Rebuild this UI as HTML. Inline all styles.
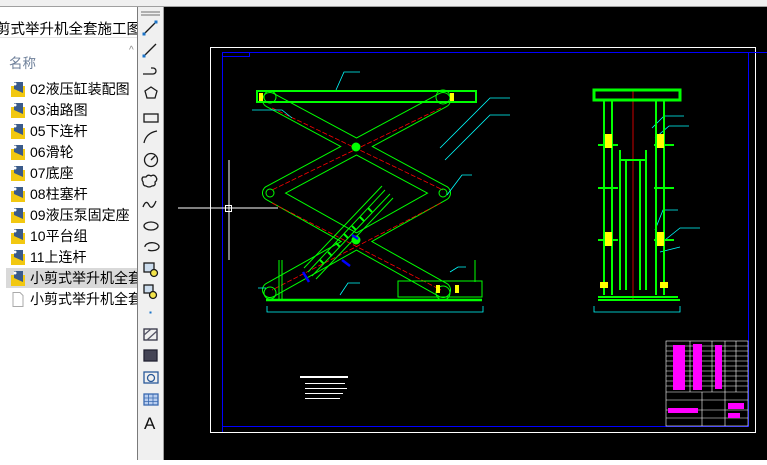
<!DOCTYPE html>
<html><head><meta charset="utf-8"><style>
*{margin:0;padding:0;box-sizing:border-box}
body{width:767px;height:460px;overflow:hidden;background:#fff;font-family:"Liberation Sans","Noto Sans CJK SC",sans-serif;position:relative}
#top{position:absolute;left:0;top:0;width:767px;height:7px;background:#f0f0f0;border-bottom:1px solid #a0a0a0}
#left{position:absolute;left:0;top:7px;width:137px;height:453px;background:#fff;overflow:hidden}
.t{position:absolute;left:-4px;top:11px;font-size:14.5px;color:#000;white-space:nowrap}
.sep{position:absolute;left:0;top:30px;width:137px;height:1px;background:#e5e5e5}
.hd{position:absolute;left:9px;top:45px;font-size:13.5px;color:#6d7f99}
.car{position:absolute;left:129px;top:38px;font-size:10px;color:#888}
.it{position:absolute;left:6px;height:20px;width:140px;font-size:14px;line-height:20px;white-space:nowrap;padding-left:24px}
.it.sel{background:#d9d9d9}
.ic{position:absolute;left:5px;top:3px;width:14px;height:15px}
#tb{position:absolute;left:137px;top:7px;width:27px;height:453px;background:#f0f0f0;border-left:1px solid #7a7a7a;border-right:1px solid #a0a0a0}
#cv{position:absolute;left:164px;top:7px;width:603px;height:453px;background:#000}
</style></head><body>
<div id="top"></div>
<div id="left">
<div class="t">剪式举升机全套施工图</div>
<div class="sep"></div>
<div class="hd">名称</div><div class="car">^</div>
<div class="it" style="top:72px"><svg class="ic" viewBox="0 0 14 15"><path d="M0 4h14v11H0z" fill="#f2c811"/><path d="M3 0h9l0 11L3 7z" fill="#3a5a8a"/><circle cx="4" cy="2" r="1.5" fill="#fff"/></svg>02液压缸装配图</div>
<div class="it" style="top:93px"><svg class="ic" viewBox="0 0 14 15"><path d="M0 4h14v11H0z" fill="#f2c811"/><path d="M3 0h9l0 11L3 7z" fill="#3a5a8a"/><circle cx="4" cy="2" r="1.5" fill="#fff"/></svg>03油路图</div>
<div class="it" style="top:114px"><svg class="ic" viewBox="0 0 14 15"><path d="M0 4h14v11H0z" fill="#f2c811"/><path d="M3 0h9l0 11L3 7z" fill="#3a5a8a"/><circle cx="4" cy="2" r="1.5" fill="#fff"/></svg>05下连杆</div>
<div class="it" style="top:135px"><svg class="ic" viewBox="0 0 14 15"><path d="M0 4h14v11H0z" fill="#f2c811"/><path d="M3 0h9l0 11L3 7z" fill="#3a5a8a"/><circle cx="4" cy="2" r="1.5" fill="#fff"/></svg>06滑轮</div>
<div class="it" style="top:156px"><svg class="ic" viewBox="0 0 14 15"><path d="M0 4h14v11H0z" fill="#f2c811"/><path d="M3 0h9l0 11L3 7z" fill="#3a5a8a"/><circle cx="4" cy="2" r="1.5" fill="#fff"/></svg>07底座</div>
<div class="it" style="top:177px"><svg class="ic" viewBox="0 0 14 15"><path d="M0 4h14v11H0z" fill="#f2c811"/><path d="M3 0h9l0 11L3 7z" fill="#3a5a8a"/><circle cx="4" cy="2" r="1.5" fill="#fff"/></svg>08柱塞杆</div>
<div class="it" style="top:198px"><svg class="ic" viewBox="0 0 14 15"><path d="M0 4h14v11H0z" fill="#f2c811"/><path d="M3 0h9l0 11L3 7z" fill="#3a5a8a"/><circle cx="4" cy="2" r="1.5" fill="#fff"/></svg>09液压泵固定座</div>
<div class="it" style="top:219px"><svg class="ic" viewBox="0 0 14 15"><path d="M0 4h14v11H0z" fill="#f2c811"/><path d="M3 0h9l0 11L3 7z" fill="#3a5a8a"/><circle cx="4" cy="2" r="1.5" fill="#fff"/></svg>10平台组</div>
<div class="it" style="top:240px"><svg class="ic" viewBox="0 0 14 15"><path d="M0 4h14v11H0z" fill="#f2c811"/><path d="M3 0h9l0 11L3 7z" fill="#3a5a8a"/><circle cx="4" cy="2" r="1.5" fill="#fff"/></svg>11上连杆</div>
<div class="it sel" style="top:261px"><svg class="ic" viewBox="0 0 14 15"><path d="M0 4h14v11H0z" fill="#f2c811"/><path d="M3 0h9l0 11L3 7z" fill="#3a5a8a"/><circle cx="4" cy="2" r="1.5" fill="#fff"/></svg>小剪式举升机全套施</div>
<div class="it" style="top:282px"><svg class="ic" viewBox="0 0 14 15"><path d="M2 .5h7l3 3v11H2z" fill="#fff" stroke="#aaa"/></svg>小剪式举升机全套施</div>
</div>
<div id="tb">
<svg width="26" height="453" viewBox="0 0 26 453" fill="none" stroke="#1a1a1a" stroke-width="1.3">
<path d="M3 5h19M3 8h19" stroke="#888"/>
<path d="M6 27l12-12"/><rect x="4.5" y="25.5" width="3" height="3" fill="#1a73c8" stroke="none"/><rect x="16.5" y="13.5" width="3" height="3" fill="#1a73c8" stroke="none"/>
<path d="M6 49l12-12"/><rect x="4.5" y="47.5" width="3" height="3" fill="#1a73c8" stroke="none"/>
<path d="M5 67h10a3 3 0 0 0 0-6h-2"/>
<path d="M13 80l6 4-2 7h-8l-2-7z"/>
<rect x="6" y="107" width="14" height="8"/>
<path d="M6 136q2-10 13-12"/>
<circle cx="13" cy="153" r="6.5"/><path d="M13 153l4-4"/>
<path d="M8 170q2-3 5-1 3-2 5 1 2 3-1 5 1 4-3 4-3 2-6 0-3 0-3-4-2-3 0-5z"/>
<path d="M5 200q3-8 6-2t7-4"/>
<ellipse cx="13" cy="219" rx="7" ry="4"/>
<path d="M7 240a7 4 0 1 1 3 3"/>
<rect x="6" y="256" width="10" height="9" fill="#cde"/><circle cx="16" cy="266" r="3.5" fill="#f2e34a"/>
<rect x="6" y="278" width="9" height="8" fill="#cde"/><circle cx="15" cy="288" r="3.5" fill="#f2e34a"/>
<rect x="11.5" y="304.5" width="2" height="2" fill="#1a73c8" stroke="none"/>
<rect x="6" y="322" width="13" height="11" stroke="#334"/><path d="M6 328l7-6M9 333l10-9" stroke="#556"/>
<rect x="6" y="343" width="13" height="11" fill="#445" stroke="#223"/>
<rect x="6" y="365" width="14" height="11" stroke="#2a5a9a"/><circle cx="13" cy="371" r="3.5" stroke="#2a5a9a"/>
<rect x="6" y="387" width="14" height="11" fill="#b8cdef" stroke="#3a6ab0"/><path d="M6 391h14M6 394.5h14M10.5 387v11M15 387v11" stroke="#3a6ab0" stroke-width=".8"/>
<text x="6" y="422" font-size="17" fill="#111" stroke="none" font-family="Liberation Sans">A</text>
</svg>
</div>
<div id="cv">
<svg width="603" height="453" viewBox="164 7 603 453" fill="none">
<rect x="210.5" y="47.5" width="545" height="385" stroke="#fff"/>
<path d="M222.5 432V52.5H767M222.5 56.5h27V52" stroke="#00f"/>
<path d="M222 426.5h526.5V52" stroke="#00f"/>
<g stroke-linecap="round">
<g stroke="#0f0" stroke-width="16">
<path d="M270 100L443 193M443 100L270 193M270 193L443 290M443 193L270 290"/>
</g>
<g stroke="#000" stroke-width="14">
<path d="M270 100L443 193M443 100L270 193M270 193L443 290M443 193L270 290"/>
</g>
</g>
<g stroke="#f00" stroke-width=".8" stroke-dasharray="5 2">
<path d="M272 108L443 190M441 108L272 190M272 203L441 290M441 203L272 290"/>
<path d="M633 90v210" stroke-dasharray="none"/>
</g>
<g stroke="#0f0" stroke-width="1">
<rect x="257" y="91" width="219" height="11" stroke-width="2"/>
<path d="M266 300h216" stroke-width="2.5"/>
<rect x="398" y="281" width="84" height="16" />
<path d="M279 260v40M282 260v40M475 260v22"/>
<circle cx="270" cy="193" r="4"/><circle cx="443" cy="193" r="4"/>
<circle cx="270" cy="293" r="6"/><circle cx="443" cy="293" r="7"/><circle cx="270" cy="97" r="6"/><circle cx="443" cy="97" r="7"/>
<circle cx="356" cy="147" r="4" fill="#0f0"/><circle cx="356" cy="240" r="4" fill="#0f0"/>
<path d="M308 272L385 190M312 276L390 194M316 279L393 198M304 268L382 186" />
<path d="M320 260l4 4M328 252l4 4M336 243l4 4M344 234l4 4M352 226l4 4M360 217l4 4M368 208l4 4" stroke-width="2"/>
</g>
<g fill="#ff0"><rect x="259" y="93" width="4" height="8"/><rect x="450" y="93" width="4" height="8"/><rect x="455" y="285" width="4" height="8"/><rect x="436" y="285" width="4" height="8"/></g>
<path d="M303 272l6 10M342 260l8 6M352 235l6 4" stroke="#00f" stroke-width="2.5"/>
<g stroke="#0ff" stroke-width=".8">
<path d="M336 90l8-18h16M252 110h30l10 8M440 148l50-50h20M445 160l45-45h20M447 195l15-20h10M450 272l8-5h8M340 295l8-12h12M267 306v6h216v-6M594 306v6h86v-6M652 128l12-12h20M655 138l14-12h20M655 230l8-20h15M665 240l15-12h20M660 252l20-5M258 288h8"/>
</g>
<g stroke="#0f0" stroke-width="2">
<rect x="594" y="90" width="86" height="10" stroke-width="3"/>
<path d="M604 100v195M612 100v195M656 100v195M664 100v195M620 150v140M646 150v140M626 160v130M640 160v130M598 297h80" />
<path d="M598 145h20M654 145h20M598 240h20M654 240h20M598 300h82M598 188h20M654 188h20M620 160h26"/>
</g>
<g fill="#ff0"><rect x="605" y="134" width="7" height="14"/><rect x="657" y="134" width="7" height="14"/><rect x="605" y="232" width="7" height="14"/><rect x="657" y="232" width="7" height="14"/><rect x="600" y="282" width="8" height="6"/><rect x="660" y="282" width="8" height="6"/></g>
<g stroke="#fff" stroke-width=".6">
<rect x="666" y="341" width="82" height="85"/>
<path d="M666 346h82M666 351h82M666 356h82M666 361h82M666 366h82M666 371h82M666 376h82M666 381h82M666 386h82M666 392h82M666 400h82M666 410h82M666 418h82M690 341v51M712 341v51M725 341v85M736 341v51M702 392v34"/>
</g>
<g fill="#f0f"><rect x="673" y="345" width="12" height="45"/><rect x="693" y="344" width="9" height="46"/><rect x="715" y="345" width="7" height="44"/><rect x="728" y="403" width="16" height="6"/><rect x="728" y="413" width="12" height="5"/><rect x="668" y="408" width="30" height="5"/></g>
<g fill="#fff"><rect x="300" y="376" width="48" height="2"/><rect x="305" y="383" width="40" height="1"/><rect x="305" y="388" width="42" height="1"/><rect x="305" y="393" width="38" height="1"/><rect x="305" y="398" width="35" height="1"/></g>
<path d="M229 160v100M178 208h100" stroke="#fff"/>
<rect x="225.5" y="205.5" width="6" height="6" stroke="#fff"/>
</svg>
</div>
</body></html>
